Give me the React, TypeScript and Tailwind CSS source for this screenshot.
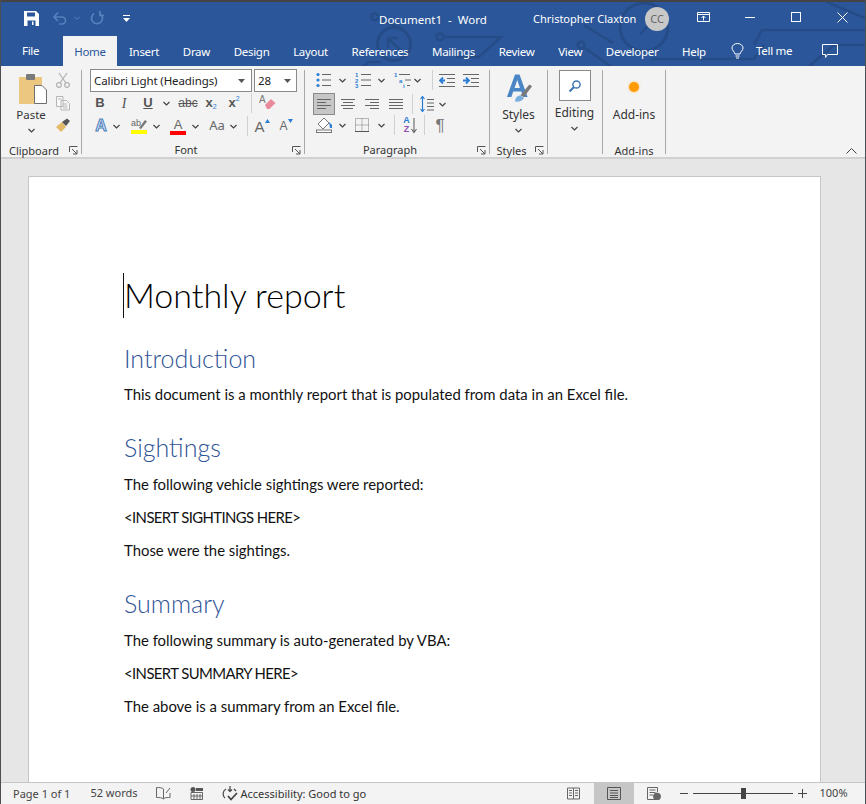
import { ReactNode } from "react";

const ui = "font-['Noto_Sans',sans-serif]";
const doc = "font-['Lato',sans-serif]";

function Chevron({ className = "" }: { className?: string }) {
  return (
    <svg width="7" height="5" viewBox="0 0 7 5" className={`shrink-0 ${className}`}>
      <path d="M0.5 1 L3.5 4 L6.5 1" fill="none" stroke="#444" strokeWidth="1.2" />
    </svg>
  );
}

function Launcher() {
  return (
    <svg width="9" height="9" viewBox="0 0 9 9">
      <path d="M0.5 6 V0.5 H8.5 M3 3 L8 8 M8 4 V8 H4" fill="none" stroke="#555" strokeWidth="1" />
    </svg>
  );
}

function Circuit() {
  return (
    <svg width="866" height="66" viewBox="0 0 866 66" className="absolute left-0 top-0" fill="none" stroke="#264c88" strokeWidth="2.5">
      <circle cx="374" cy="15" r="3.5" />
      <path d="M378 17 L402 27" />
      <circle cx="393" cy="42" r="16.5" strokeWidth="3" />
      <path d="M387 36 L401 50 M387 36 V46 M387 36 H397" />
      <circle cx="439" cy="35" r="3.5" />
      <path d="M443 35 H500 L478 55 H455" />
      <path d="M360 66 L368 60 H380" />
      <circle cx="643" cy="25" r="24" strokeWidth="3" />
      <path d="M639 32 L660 11 M650 10 H660 V20" />
      <circle cx="580" cy="43" r="3.5" />
      <path d="M584 46 L612 66 M583 23 L612 41" />
      <path d="M650 57 H753 L763 43 M753 43 L761 28 H866" />
      <path d="M806 66 L833 43 H866" />
      <path d="M826 0 L866 17" />
    </svg>
  );
}

function Tab({ label }: { label: string }) {
  return <div className="h-[30px] pt-[2px] flex items-center text-white whitespace-nowrap">{label}</div>;
}

function Group({ width, label, launcher, children }: { width: string; label: string; launcher?: boolean; children: ReactNode }) {
  return (
    <div className={`${width} relative h-[84px] border-r border-[#a8a8a8] shrink-0`}>
      <div className="h-[72px]">{children}</div>
      <div className={`h-[16px] flex items-center justify-center text-[11px] leading-none text-[#333] ${launcher ? "pr-[14px]" : ""}`}>{label}</div>
      {launcher && (
        <div className="absolute right-[3px] bottom-[-1px] flex">
          <Launcher />
        </div>
      )}
    </div>
  );
}

function Lines({ rows, w = 15 }: { rows: [number, number][]; w?: number }) {
  return (
    <svg width={w} height="12" viewBox={`0 0 ${w} 12`}>
      {rows.map(([x, len], i) => (
        <rect key={i} x={x} y={1 + i * 3} width={len} height="1" fill="#666" />
      ))}
    </svg>
  );
}

function ClipboardGroup() {
  return (
    <Group width="w-[81px]" label="Clipboard" launcher>
      <div className="flex">
        <div className="w-[60px] shrink-0 flex flex-col items-center pt-[4px]">
          <svg width="28" height="30" viewBox="0 0 28 30" className="ml-[4px]">
            <rect x="0" y="3" width="23" height="27" fill="#ecc77f" />
            <rect x="7" y="0" width="9" height="6" rx="1" fill="#7a7a7a" />
            <path d="M15.5 11.5 H23 L27.5 16 V29.5 H15.5 Z" fill="#fff" stroke="#6e6e6e" />
          </svg>
          <div className="text-[11.5px] leading-[16px] text-[#333] mt-[3px]">Paste</div>
          <Chevron className="mt-[5px]" />
        </div>
        <div className="flex flex-col items-center gap-[7px] pt-[2px] -ml-[6px]">
          <svg width="16" height="16" viewBox="0 0 16 16" fill="none" stroke="#b5b5b5" strokeWidth="1.3">
            <circle cx="4" cy="13" r="2.4" />
            <circle cx="12" cy="13" r="2.4" />
            <path d="M5 11 L12 1 M11 11 L4 1" />
          </svg>
          <svg width="16" height="16" viewBox="0 0 16 16" fill="#fafafa" stroke="#b5b5b5">
            <path d="M1.5 1.5 H8 V11.5 H1.5 Z M6 5.5 H11.5 L14.5 8.5 V15 H6 Z" />
            <path d="M3 4 H6.5 M8 9 H12 M8 11 H12.5 M8 13 H12.5" />
          </svg>
          <svg width="16" height="15" viewBox="0 0 16 15">
            <path d="M1 9 L7 4 L11 9 L6 14 Z" fill="#e4b968" />
            <path d="M7 4 L12 0.5 L15 3 L11 8 Z" fill="#555" />
          </svg>
        </div>
      </div>
    </Group>
  );
}

function IconBtn({ w, children }: { w: string; children: ReactNode }) {
  return <div className={`${w} h-[22px] flex items-center justify-center shrink-0`}>{children}</div>;
}

function Sep({ h = "h-[20px]" }: { h?: string }) {
  return <div className={`w-px ${h} bg-[#d0d0d0] shrink-0`} />;
}

function Gap({ w }: { w: string }) {
  return <div className={`${w} shrink-0`} />;
}

function LetterA({ color, size = "text-[15px]" }: { color: string; size?: string }) {
  return <span className={`${size} leading-none font-['Liberation_Sans',sans-serif]`} style={{ color }}>A</span>;
}

function FontGroup() {
  return (
    <Group width="w-[223px]" label="Font" launcher>
      <div className="pl-[8px] -mt-px">
        <div className="flex gap-[2px]">
          <div className="w-[162px] h-[23px] bg-white border border-[#8a8a8a] flex items-center justify-between pl-[3px] pr-[6px] text-[11.5px] tracking-[-0.1px] text-[#222]">
            <span className="whitespace-nowrap">Calibri Light (Headings)</span>
            <svg width="7" height="4" viewBox="0 0 7 4"><path d="M0 0 H7 L3.5 4 Z" fill="#555" /></svg>
          </div>
          <div className="w-[43px] h-[23px] bg-white border border-[#8a8a8a] flex items-center justify-between pl-[3px] pr-[5px] text-[11.5px] text-[#222]">
            <span>28</span>
            <svg width="7" height="4" viewBox="0 0 7 4"><path d="M0 0 H7 L3.5 4 Z" fill="#555" /></svg>
          </div>
        </div>
        <div className="flex items-center h-[22px] text-[#555] font-['Liberation_Sans',sans-serif]">
          <IconBtn w="w-[20px]"><b className="text-[13px]">B</b></IconBtn>
          <IconBtn w="w-[28px]"><i className="text-[14px] font-['Liberation_Serif',serif]">I</i></IconBtn>
          <IconBtn w="w-[20px]"><span className="text-[13px] font-bold underline">U</span></IconBtn>
          <Gap w="w-[2px]" />
          <IconBtn w="w-[12px]"><Chevron /></IconBtn>
          <Gap w="w-[4px]" />
          <IconBtn w="w-[24px]"><span className="text-[12px] line-through">abc</span></IconBtn>
          <IconBtn w="w-[22px]"><b className="text-[13px]">x</b><span className="text-[7px] text-[#2b7cd3] mt-[8px]">2</span></IconBtn>
          <IconBtn w="w-[24px]"><b className="text-[13px]">x</b><span className="text-[7px] text-[#2b7cd3] mb-[8px]">2</span></IconBtn>
          <Gap w="w-[5px]" />
          <Sep />
          <IconBtn w="w-[32px]">
            <svg width="18" height="18" viewBox="0 0 18 18">
              <path d="M6 11 L12 5 L16.5 9 L10.5 15 H8 Z" fill="#e88a9a" />
              <text x="0" y="9" fontSize="10" fill="#777" fontFamily="Liberation Sans">A</text>
            </svg>
          </IconBtn>
        </div>
        <div className="flex items-center mt-px h-[22px] text-[#555] font-['Liberation_Sans',sans-serif]">
          <IconBtn w="w-[22px]">
            <span className="text-[16px] font-bold leading-none text-[#dbe8f5] [-webkit-text-stroke:1px_#4a7ebb]">A</span>
          </IconBtn>
          <IconBtn w="w-[8px]"><Chevron /></IconBtn>
          <Gap w="w-[8px]" />
          <IconBtn w="w-[22px]">
            <svg width="16" height="16" viewBox="0 0 16 16">
              <text x="0" y="8" fontSize="9" fill="#666" fontFamily="Liberation Sans">ab</text>
              <path d="M8 10 L14 2 L16 3.5 L10 11 Z" fill="#777" />
              <rect x="0" y="12" width="16" height="4" fill="#ffff00" />
            </svg>
          </IconBtn>
          <Gap w="w-[2px]" />
          <IconBtn w="w-[8px]"><Chevron /></IconBtn>
          <Gap w="w-[8px]" />
          <IconBtn w="w-[20px]">
            <div className="flex flex-col items-center">
              <LetterA color="#666" size="text-[13px]" />
              <div className="w-[16px] h-[4px] bg-[#ff0000]" />
            </div>
          </IconBtn>
          <Gap w="w-[3px]" />
          <IconBtn w="w-[8px]"><Chevron /></IconBtn>
          <Gap w="w-[6px]" />
          <IconBtn w="w-[24px]"><span className={`${ui} text-[13px] text-[#666]`}>Aa</span></IconBtn>
          <IconBtn w="w-[8px]"><Chevron /></IconBtn>
          <Gap w="w-[10px]" />
          <Sep />
          <Gap w="w-[2px]" />
          <IconBtn w="w-[24px]">
            <LetterA color="#666" />
            <svg width="5" height="4" viewBox="0 0 5 4" className="mb-[10px]"><path d="M0 4 H5 L2.5 0 Z" fill="#2b7cd3" /></svg>
          </IconBtn>
          <IconBtn w="w-[24px]">
            <LetterA color="#666" size="text-[12px]" />
            <svg width="5" height="4" viewBox="0 0 5 4" className="mb-[10px]"><path d="M0 0 H5 L2.5 4 Z" fill="#2b7cd3" /></svg>
          </IconBtn>
        </div>
      </div>
    </Group>
  );
}

function Bullets() {
  return (
    <svg width="15" height="16" viewBox="0 0 15 16">
      <circle cx="2" cy="2.5" r="1.6" fill="#2b7cd3" />
      <circle cx="2" cy="8" r="1.6" fill="#2b7cd3" />
      <circle cx="2" cy="13.5" r="1.6" fill="#2b7cd3" />
      <rect x="6" y="2" width="9" height="1" fill="#666" />
      <rect x="6" y="7.5" width="9" height="1" fill="#666" />
      <rect x="6" y="13" width="9" height="1" fill="#666" />
    </svg>
  );
}

function Numbering() {
  return (
    <svg width="16" height="16" viewBox="0 0 16 16">
      <text x="0" y="5" fontSize="6" fontWeight="700" fill="#2b7cd3" fontFamily="Liberation Sans">1</text>
      <text x="0" y="11" fontSize="6" fontWeight="700" fill="#2b7cd3" fontFamily="Liberation Sans">2</text>
      <text x="0" y="16" fontSize="6" fontWeight="700" fill="#2b7cd3" fontFamily="Liberation Sans">3</text>
      <rect x="6" y="2" width="10" height="1" fill="#666" />
      <rect x="6" y="7.5" width="10" height="1" fill="#666" />
      <rect x="6" y="13" width="10" height="1" fill="#666" />
    </svg>
  );
}

function Multilevel() {
  return (
    <svg width="18" height="16" viewBox="0 0 18 16">
      <text x="0" y="5" fontSize="6" fontWeight="700" fill="#2b7cd3" fontFamily="Liberation Sans">1</text>
      <text x="5" y="10.5" fontSize="6" fontWeight="700" fill="#2b7cd3" fontFamily="Liberation Sans">a</text>
      <text x="9" y="16" fontSize="6" fontWeight="700" fill="#2b7cd3" fontFamily="Liberation Sans">i</text>
      <rect x="5" y="2" width="11" height="1" fill="#666" />
      <rect x="11" y="7.5" width="6" height="1" fill="#666" />
      <rect x="13" y="13" width="3" height="1" fill="#666" />
    </svg>
  );
}

function Indent({ flip }: { flip?: boolean }) {
  return (
    <svg width="16" height="13" viewBox="0 0 16 13">
      <path d={flip ? "M0 6.5 H5 M3 3.5 L6 6.5 L3 9.5" : "M6 6.5 H1 M4 3.5 L1 6.5 L4 9.5"} fill="none" stroke="#2b7cd3" strokeWidth="1.8" />
      <path d="M0 0.5 H16 M8 4.5 H16 M8 8.5 H16 M0 12.5 H16" stroke="#666" />
    </svg>
  );
}

function ParagraphGroup() {
  return (
    <Group width="w-[185px]" label="Paragraph" launcher>
      <div className="pl-[8px] -mt-px">
        <div className="flex items-center h-[22px]">
          <IconBtn w="w-[20px]"><Bullets /></IconBtn>
          <Gap w="w-[5px]" />
          <IconBtn w="w-[8px]"><Chevron /></IconBtn>
          <Gap w="w-[7px]" />
          <IconBtn w="w-[20px]"><Numbering /></IconBtn>
          <Gap w="w-[4px]" />
          <IconBtn w="w-[8px]"><Chevron /></IconBtn>
          <Gap w="w-[8px]" />
          <IconBtn w="w-[20px]"><Multilevel /></IconBtn>
          <IconBtn w="w-[8px]"><Chevron /></IconBtn>
          <Gap w="w-[11px]" />
          <Sep />
          <Gap w="w-[2px]" />
          <IconBtn w="w-[24px]"><Indent /></IconBtn>
          <IconBtn w="w-[24px]"><Indent flip /></IconBtn>
        </div>
        <div className="flex items-center h-[22px] mt-[2px]">
          <IconBtn w="w-[22px]">
            <div className="w-[22px] h-[22px] bg-[#c6c6c6] border border-[#8a8a8a] flex items-center justify-center">
              <Lines rows={[[0, 14], [0, 9], [0, 14], [0, 9]]} />
            </div>
          </IconBtn>
          <Gap w="w-px" />
          <IconBtn w="w-[24px]"><Lines rows={[[0, 14], [2, 10], [0, 14], [2, 10]]} /></IconBtn>
          <IconBtn w="w-[24px]"><Lines rows={[[0, 14], [5, 9], [0, 14], [5, 9]]} /></IconBtn>
          <IconBtn w="w-[24px]"><Lines rows={[[0, 14], [0, 14], [0, 14], [0, 14]]} /></IconBtn>
          <Gap w="w-[4px]" />
          <Sep />
          <Gap w="w-[4px]" />
          <IconBtn w="w-[20px]">
            <svg width="14" height="16" viewBox="0 0 14 16">
              <path d="M2.5 1 V15 M0.5 3 L2.5 0.5 L4.5 3 M0.5 13 L2.5 15.5 L4.5 13" fill="none" stroke="#2b7cd3" strokeWidth="1.2" />
              <path d="M7 3.5 H14 M7 7 H14 M7 10.5 H14 M7 14 H14" stroke="#666" />
            </svg>
          </IconBtn>
          <Gap w="w-px" />
          <IconBtn w="w-[8px]"><Chevron /></IconBtn>
        </div>
        <div className="flex items-center h-[22px] -mt-px">
          <IconBtn w="w-[22px]">
            <svg width="17" height="16" viewBox="0 0 17 16">
              <path d="M2 7 L8 1 L13 6 L7 12 Z" fill="#fff" stroke="#777" />
              <path d="M13 5 L16 8 V11 H14 Z" fill="#2b7cd3" />
              <rect x="0.5" y="13" width="15" height="2.5" fill="#fff" stroke="#777" />
            </svg>
          </IconBtn>
          <Gap w="w-[3px]" />
          <IconBtn w="w-[8px]"><Chevron /></IconBtn>
          <Gap w="w-[6px]" />
          <IconBtn w="w-[20px]">
            <svg width="14" height="14" viewBox="0 0 14 14">
              <path d="M0.5 0.5 H13.5 V13.5 H0.5 Z M7 0.5 V13.5 M0.5 7 H13.5" fill="none" stroke="#777" strokeDasharray="1 1" />
              <path d="M0 13.5 H14" stroke="#555" />
            </svg>
          </IconBtn>
          <Gap w="w-[5px]" />
          <IconBtn w="w-[8px]"><Chevron /></IconBtn>
          <Gap w="w-[9px]" />
          <Sep />
          <Gap w="w-px" />
          <IconBtn w="w-[28px]">
            <span className="flex flex-col items-center text-[9px] leading-[9px] font-bold font-['Liberation_Sans',sans-serif]">
              <span className="text-[#2b7cd3]">A</span>
              <span className="text-[#8f4fb5]">Z</span>
            </span>
            <svg width="6" height="17" viewBox="0 0 6 17" className="ml-[1px]">
              <path d="M3 1 V15 M0.5 12 L3 15.5 L5.5 12" fill="none" stroke="#666" strokeWidth="1.1" />
            </svg>
          </IconBtn>
          <Sep />
          <IconBtn w="w-[30px]"><span className="text-[17px] leading-none text-[#777] font-['Liberation_Sans',sans-serif]">¶</span></IconBtn>
        </div>
      </div>
    </Group>
  );
}

function StylesGroup() {
  return (
    <Group width="w-[58px]" label="Styles" launcher>
      <div className="flex flex-col items-center pt-[3px]">
        <svg width="27" height="30" viewBox="0 0 30 32" className="ml-[2px]">
          <path d="M1 26 L10 1 H15 L24 26 H19 L17 20 H8 L6 26 Z M9.5 16 H15.5 L12.5 7 Z" fill="#4a86c5" />
          <path d="M16 24 L26 12 L29 14 L20 26 Z" fill="#7a7a7a" />
          <path d="M10 31 Q10 25 16 24 L20 27 Q17 32 10 31 Z" fill="#7aaedc" />
        </svg>
        <div className="text-[12px] leading-[16px] text-[#333] mt-[4px]">Styles</div>
        <Chevron className="mt-[5px]" />
      </div>
    </Group>
  );
}

function EditingGroup() {
  return (
    <Group width="w-[55px]" label="">
      <div className="flex flex-col items-center pr-px">
        <div className="w-[32px] h-[31px] bg-white border border-[#8a8a8a] flex items-center justify-center">
          <svg width="14" height="14" viewBox="0 0 14 14" fill="none" stroke="#3f78b5">
            <circle cx="8.5" cy="5.5" r="3.6" strokeWidth="1.5" />
            <path d="M6 8 L1.5 12.5" strokeWidth="2.2" />
          </svg>
        </div>
        <div className="text-[12px] leading-[16px] text-[#333] mt-[4px]">Editing</div>
        <Chevron className="mt-[5px]" />
      </div>
    </Group>
  );
}

function AddinsGroup() {
  return (
    <Group width="w-[63px]" label="Add-ins">
      <div className="flex flex-col items-center pt-[12px]">
        <div className="w-[10px] h-[10px] rounded-full bg-[#ff9a00] shadow-[0_0_3px_#ffc870]" />
        <div className="text-[12px] leading-[16px] text-[#333] mt-[15px]">Add-ins</div>
      </div>
    </Group>
  );
}

function Para({ children, className = "" }: { children: ReactNode; className?: string }) {
  return <p className={`text-[14.9px] leading-[20px] text-[#111] whitespace-nowrap ${className}`}>{children}</p>;
}

function Heading({ children, className = "" }: { children: ReactNode; className?: string }) {
  return <h2 className={`text-[25px] leading-[32px] font-light text-[#2f5496] ${className}`}>{children}</h2>;
}

export default function App() {
  return (
    <div className={`${ui} w-[866px] h-[804px] overflow-hidden flex flex-col bg-[#e6e6e6] border-l border-r border-[#4a4f52]`}>
      <div className="relative h-[66px] bg-[#2b579a] border-t-2 border-[#444] shrink-0">
        <Circuit />
        <div className="relative h-[34px] flex items-center text-[11.5px]">
          <div className="w-[378px] shrink-0 flex items-center pl-[23px] mb-[2px]">
            <svg width="15" height="15" viewBox="0 0 15 15" className="shrink-0">
              <path d="M0 0 H12 L15 3 V15 H0 Z" fill="#fff" />
              <rect x="3" y="1.5" width="8" height="4" fill="#2b579a" />
              <rect x="3.5" y="9.5" width="8" height="5.5" fill="#2b579a" />
              <rect x="8" y="10.5" width="1.5" height="3.5" fill="#fff" />
            </svg>
            <svg width="14" height="14" viewBox="0 0 14 14" fill="none" stroke="#5482bd" strokeWidth="1.6" className="ml-[14px] shrink-0">
              <path d="M1.5 6 H9 A3.5 3.5 0 0 1 9 13 H6 M5 1.5 L1 6 L5 10" />
            </svg>
            <svg width="6" height="4" viewBox="0 0 6 4" fill="none" stroke="#5482bd" className="ml-[7px] shrink-0">
              <path d="M0 0.5 L3 3.5 L6 0.5" />
            </svg>
            <svg width="14" height="14" viewBox="0 0 14 14" fill="none" stroke="#5482bd" strokeWidth="1.7" className="ml-[10px] shrink-0">
              <path d="M10 2.5 A5.5 5.5 0 1 1 4 2.5 M10 0 V4.5 H14" />
            </svg>
            <svg width="7" height="7" viewBox="0 0 7 7" fill="#fff" className="ml-[19px] shrink-0">
              <rect x="0" y="0" width="7" height="1" />
              <path d="M0 3 H7 L3.5 7 Z" />
            </svg>
          </div>
          <div className="w-[154px] shrink-0 text-white whitespace-pre mt-[1px]">Document1  -  Word</div>
          <div className="w-[103px] shrink-0 text-[11px] text-white whitespace-nowrap">Christopher Claxton</div>
          <div className="ml-[9px] w-[24px] h-[24px] shrink-0 rounded-full bg-[#c8c8c8] text-[#666] text-[11px] flex items-center justify-center">CC</div>
          <svg width="13" height="11" viewBox="0 0 13 11" fill="none" stroke="#fff" className="ml-[28px] mb-[4px] shrink-0">
            <path d="M0.5 0.5 H12.5 V9.5 H0.5 Z M0.5 2.5 H12.5 M6.5 8.5 V4 M4.5 6 L6.5 4 L8.5 6" />
          </svg>
          <div className="ml-[35px] mb-[4px] w-[10px] h-px bg-white shrink-0" />
          <div className="ml-[36px] mb-[4px] w-[10px] h-[10px] border border-white shrink-0" />
          <svg width="11" height="11" viewBox="0 0 11 11" stroke="#fff" className="ml-[36px] mb-[4px] shrink-0">
            <path d="M0.5 0.5 L10.5 10.5 M10.5 0.5 L0.5 10.5" />
          </svg>
        </div>
        <div className="relative h-[30px] flex items-center text-[11.5px] tracking-[-0.3px]">
          <div className="w-[62px] shrink-0 pl-[21px] text-white">File</div>
          <div className="h-[30px] w-[54px] shrink-0 pt-[2px] bg-[#f3f3f3] text-[#2b579a] flex items-center justify-center">Home</div>
          <div className="flex justify-between w-[577px] shrink-0 ml-[12px]">
            <Tab label="Insert" />
            <Tab label="Draw" />
            <Tab label="Design" />
            <Tab label="Layout" />
            <Tab label="References" />
            <Tab label="Mailings" />
            <Tab label="Review" />
            <Tab label="View" />
            <Tab label="Developer" />
            <Tab label="Help" />
          </div>
          <svg width="13" height="16" viewBox="0 0 13 16" fill="none" stroke="#fff" className="ml-[25px] shrink-0">
            <path d="M4 11 C3.5 8.5 1 7.5 1 5 A5.5 4.5 0 0 1 12 5 C12 7.5 9.5 8.5 9 11 Z M4.5 13 H8.5 M5 15 H8" />
          </svg>
          <div className="w-[78px] shrink-0 pl-[12px] text-white whitespace-nowrap">Tell me</div>
          <svg width="16" height="15" viewBox="0 0 16 15" fill="none" stroke="#fff" className="shrink-0">
            <path d="M0.5 0.5 H15.5 V10.5 H5.5 L3.5 13.5 V10.5 H0.5 Z" />
          </svg>
        </div>
      </div>

      <div className="relative h-[93px] bg-[#f3f3f3] border-b-2 border-[#d0d0d0] pt-[4px] flex shrink-0">
        <ClipboardGroup />
        <FontGroup />
        <ParagraphGroup />
        <StylesGroup />
        <EditingGroup />
        <AddinsGroup />
        <svg width="11" height="6" viewBox="0 0 11 6" fill="none" stroke="#444" className="absolute right-[8px] bottom-[3px]">
          <path d="M0.5 5.5 L5.5 0.5 L10.5 5.5" />
        </svg>
      </div>

      <div className="flex-1 min-h-0 pt-[17px] pl-[27px] pr-[43px] overflow-hidden">
        <div className={`${doc} w-[793px] h-[640px] bg-white border border-[#c6c6c6] pl-[95px] pt-[96px]`}>
          <div className="flex items-center -ml-px h-[45px]">
            <div className="w-px h-[45px] bg-[#111] shrink-0" />
            <h1 className="text-[34px] leading-[45px] mb-[2px] font-light text-black whitespace-nowrap">Monthly report</h1>
          </div>
          <Heading className="mt-[24px]">Introduction</Heading>
          <Para className="mt-[10px]">This document is a monthly report that is populated from data in an Excel file.</Para>
          <Heading className="mt-[27px]">Sightings</Heading>
          <Para className="mt-[11px]">The following vehicle sightings were reported:</Para>
          <Para className="mt-[13px] tracking-[-0.6px]">&lt;INSERT SIGHTINGS HERE&gt;</Para>
          <Para className="mt-[13px]">Those were the sightings.</Para>
          <Heading className="mt-[27px]">Summary</Heading>
          <Para className="mt-[11px]">The following summary is auto-generated by VBA:</Para>
          <Para className="mt-[13px] tracking-[-0.6px]">&lt;INSERT SUMMARY HERE&gt;</Para>
          <Para className="mt-[13px]">The above is a summary from an Excel file.</Para>
        </div>
      </div>

      <div className="h-[22px] bg-[#f3f3f3] border-t border-[#c6c6c6] flex items-center text-[11px] text-[#444] shrink-0">
        <div className="ml-[12px] mt-[1px] whitespace-nowrap">Page 1 of 1</div>
        <div className="ml-[20px] whitespace-nowrap">52 words</div>
        <svg width="15" height="13" viewBox="0 0 15 13" fill="none" stroke="#666" className="ml-[18px] shrink-0">
          <path d="M7.5 2 C6 0.5 3 0.5 0.5 0.5 V10.5 C3 10.5 6 10.5 7.5 12 C8 11 9 10.5 14 10.5 V6 M7.5 2 V12 M10 6 L14 1" />
        </svg>
        <svg width="13" height="13" viewBox="0 0 13 13" className="ml-[19px] shrink-0">
          <circle cx="3" cy="2.5" r="2.5" fill="#555" />
          <rect x="6" y="1" width="7" height="3" fill="#555" />
          <path d="M1 5.5 H12.5 V12.5 H1 Z M4 7 V12 M7 7 V12 M10 7 V12 M1 9 H12" fill="none" stroke="#666" />
        </svg>
        <svg width="17" height="15" viewBox="0 0 17 15" fill="none" stroke="#444" strokeWidth="1.2" className="ml-[18px] shrink-0">
          <path d="M5 3 A5.5 5.5 0 0 0 4 12 M9 0 V5.5 M7 3.5 L9 5.5 L11 3.5 M13 3 L15 5" />
          <path d="M7 10 L10 13.5 L16 7" strokeWidth="1.8" />
        </svg>
        <div className="ml-[3px] mt-[1px] text-[#333] w-[127px] shrink-0 whitespace-nowrap">Accessibility: Good to go</div>
        <svg width="13" height="13" viewBox="0 0 13 13" fill="none" stroke="#666" className="ml-[199px] shrink-0">
          <path d="M0.5 1 H6.5 V12 H0.5 Z M6.5 1 H12.5 V12 H6.5 Z M2 3.5 H5 M2 6 H5 M2 8.5 H5 M8 3.5 H11 M8 6 H11 M8 8.5 H11" />
        </svg>
        <div className="ml-[14px] w-[40px] h-[21px] shrink-0 bg-[#c6c6c6] flex items-center justify-center">
          <svg width="14" height="13" viewBox="0 0 14 13" fill="none" stroke="#555">
            <path d="M0.5 0.5 H13.5 V12.5 H0.5 Z M3 3.5 H11 M3 6 H11 M3 8.5 H11 M3 10.5 H11" />
          </svg>
        </div>
        <svg width="14" height="13" viewBox="0 0 14 13" fill="none" stroke="#666" className="ml-[13px] shrink-0">
          <path d="M8 12.5 H0.5 V0.5 H10.5 V5 M2.5 3 H8.5 M2.5 5.5 H8.5 M2.5 8 H6" />
          <circle cx="10" cy="9.5" r="3.5" fill="#666" />
        </svg>
        <div className="ml-[19px] w-[8px] h-px bg-[#444] shrink-0" />
        <div className="ml-[5px] w-[100px] h-px bg-[#444] relative shrink-0">
          <div className="absolute left-[48px] -top-[5px] w-[5px] h-[11px] bg-[#444]" />
        </div>
        <svg width="9" height="9" viewBox="0 0 9 9" stroke="#444" className="ml-[5px] shrink-0">
          <path d="M0 4.5 H9 M4.5 0 V9" />
        </svg>
        <div className="ml-[13px] whitespace-nowrap">100%</div>
      </div>
    </div>
  );
}
